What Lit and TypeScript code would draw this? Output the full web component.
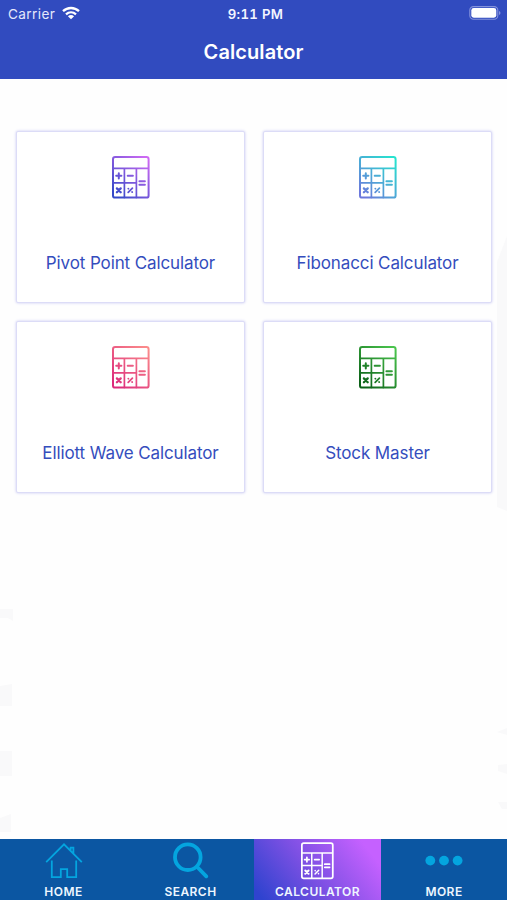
import { LitElement, html, css, svg } from "lit";
import { customElement, property } from "lit/decorators.js";

@customElement("calc-icon")
class CalcIcon extends LitElement {
  @property() from = "#fff";
  @property() to = "#fff";
  static styles = css`
    :host { display: block; }
    svg { display: block; width: 100%; height: 100%; }
  `;
  render() {
    return html`<svg viewBox="0.4 0 38 43" fill="none" stroke="url(#g)" stroke-width="2" stroke-linecap="round">
      <defs>
        <linearGradient id="g" gradientUnits="userSpaceOnUse" x1="3" y1="38" x2="36" y2="3">
          <stop offset="0" stop-color=${this.from}></stop>
          <stop offset="1" stop-color=${this.to}></stop>
        </linearGradient>
      </defs>
      <rect x="1.4" y="1" width="35.6" height="40.6" rx="2.2"></rect>
      <path stroke-width="1.7" d="M1.5 12.4H36.4M1.5 26.8H24.6M12.8 13V41.5M24.8 13V41.5"></path>
      <path stroke-width="2" d="M4.6 19.8H9.8M7.2 17.2V22.4M16.1 19.8H21.3M27.8 25.2H33.3M27.8 28.8H33.3"></path>
      <path stroke-width="2.3" d="M5.3 32.4L9.1 36.2M9.1 32.4L5.3 36.2"></path>
      <path stroke-width="1.8" d="M16.6 36.4L20.8 32.2M16.7 32.6L16.8 32.7M20.5 36L20.6 36.1"></path>
    </svg>`;
  }
}

const home = svg`<svg class="home" viewBox="0 0 38 38" fill="none" stroke="#04a5df" stroke-width="1.8">
  <path d="M1.2 20.2L19 2.3L36.8 20.2M25.6 8.8V5.6H28.4V11.6M6.8 18.5V35.2H15.8V27.2H22.2V35.2H31.2V18.5"></path>
</svg>`;
const search = svg`<svg class="home" viewBox="0 0 38 38" fill="none" stroke="#04a5df">
  <circle cx="15.8" cy="15.2" r="12.8" stroke-width="3.8"></circle>
  <path stroke-width="3.8" stroke-linecap="round" d="M25.2 25L34.3 34.3"></path>
</svg>`;
const dots = svg`<svg class="home" viewBox="0 0 38 38" fill="#04a5df">
  <circle cx="5.3" cy="18.6" r="4.9"></circle><circle cx="19" cy="18.6" r="4.9"></circle><circle cx="32.6" cy="18.6" r="4.9"></circle>
</svg>`;

@customElement("app-root")
class AppRoot extends LitElement {
  static styles = css`
    :host {
      display: flex; flex-direction: column; width: 507px; height: 900px; overflow: hidden;
      font-family: Inter, "Liberation Sans", sans-serif; background: #fefefe; box-sizing: border-box;
    }
    header { height: 79px; background: #314bbf; color: #fff; flex: none; }
    .status {
      height: 27px; display: grid; grid-template-columns: 1fr auto 1fr; align-items: center;
      padding: 0 5px 0 8px; font-size: 13.6px; box-sizing: border-box;
    }
    .left { display: flex; align-items: center; gap: 6.5px; color: #e4e8fb; letter-spacing: 0.4px; }
    .wifi { width: 18px; height: 14px; margin-top: -2px; }
    .time { font-weight: 600; font-size: 13.2px; letter-spacing: 0.3px; padding-left: 1px; font-variant-numeric: tabular-nums; color: #f3f5ff; }
    .battery { justify-self: end; width: 32px; height: 14px; margin: -1px 1px 0 0; }
    h1 { margin: 0; text-align: center; font-size: 20px; line-height: 51px; font-weight: 560; letter-spacing: 0.08px; }
    main { flex: 1; display: grid; }
    .watermark { grid-area: 1 / 1; width: 507px; height: 760px; }
    .cards {
      grid-area: 1 / 1; z-index: 1; display: grid; grid-template-columns: 229px 229px;
      align-content: start; gap: 18px; padding: 52px 15px 0 16px;
    }
    .card {
      height: 172px; display: flex; flex-direction: column; align-items: center; background: #fff;
      border: 1px solid #dcdcf7; box-sizing: border-box; border-radius: 2px; box-shadow: 0 0 3px #c8c8f2;
    }
    .card calc-icon { width: 38px; height: 43px; margin-top: 24px; }
    .label { margin-top: 52px; font-size: 17px; line-height: 24px; letter-spacing: -0.11px; color: #344dbd; white-space: nowrap; }
    nav { height: 61px; display: grid; grid-template-columns: 254px 127px 126px; background: #0b56a2; flex: none; }
    .pair { display: grid; grid-template-columns: 127px 127px; }
    .tab {
      display: flex; flex-direction: column; align-items: center; color: #eef6ff;
      font-size: 12px; font-weight: 600; letter-spacing: 0.45px; line-height: 14px;
    }
    .tab.active { background: linear-gradient(52deg, #2f43cf 5%, #7c50e3 45%, #c561ff 88%); }
    .home { width: 38px; height: 38px; margin: 3px 0 4.5px; }
    .tab calc-icon { width: 33px; height: 38px; margin: 3px 0 4.5px; }
  `;
  private cards = [
    { label: "Pivot Point Calculator", from: "#3549c8", to: "#ce6af3" },
    { label: "Fibonacci Calculator", from: "#6c78dc", to: "#27e3cf" },
    { label: "Elliott Wave Calculator", from: "#dc2b7c", to: "#fb8b8b" },
    { label: "Stock Master", from: "#0c6118", to: "#4ac44d" },
  ];
  render() {
    return html`
      <header>
        <div class="status">
          <div class="left"><span>Carrier</span>
            <svg class="wifi" viewBox="0 0 18 14" fill="none" stroke="#fff" stroke-width="2.3">
              <path d="M1 5.2C5.6 .9 12.4 .9 17 5.2M4 8.3C6.9 5.7 11.1 5.7 14 8.3"></path>
              <path fill="#fff" stroke="none" d="M9 13.2L5.9 10.3Q9 7.9 12.1 10.3Z"></path>
            </svg>
          </div>
          <div class="time">9:11 PM</div>
          <svg class="battery" viewBox="0 0 32 14">
            <rect x=".8" y=".6" width="28" height="12.6" rx="3.7" fill="none" stroke="#8492dc" stroke-width="1.1"></rect>
            <rect x="2.3" y="2.1" width="25" height="9.6" rx="2.4" fill="#fff"></rect>
            <path d="M30 5V9Q31.5 8.4 31.5 7T30 5Z" fill="#8492dc"></path>
          </svg>
        </div>
        <h1>Calculator</h1>
      </header>
      <main>
        <svg class="watermark" viewBox="0 79 507 760" fill="#f9f9fa">
          <path d="M507 236L497 262V507L507 511Z"></path>
          <path d="M0 609H13V621L8 618H0ZM0 686L12 684V706H0ZM0 751H12V776H0ZM0 818L11 814V832H0Z"></path>
          <path d="M507 728L497 732L507 735ZM507 764L498 765V771L507 774ZM507 802H498L502 809H507Z"></path>
        </svg>
        <div class="cards">
          ${this.cards.map((c) => html`<div class="card">
            <calc-icon .from=${c.from} .to=${c.to}></calc-icon>
            <div class="label">${c.label}</div>
          </div>`)}
        </div>
      </main>
      <nav>
        <div class="pair">
          <div class="tab">${home}<span>HOME</span></div>
          <div class="tab">${search}<span>SEARCH</span></div>
        </div>
        <div class="tab active"><calc-icon></calc-icon><span>CALCULATOR</span></div>
        <div class="tab">${dots}<span>MORE</span></div>
      </nav>`;
  }
}
